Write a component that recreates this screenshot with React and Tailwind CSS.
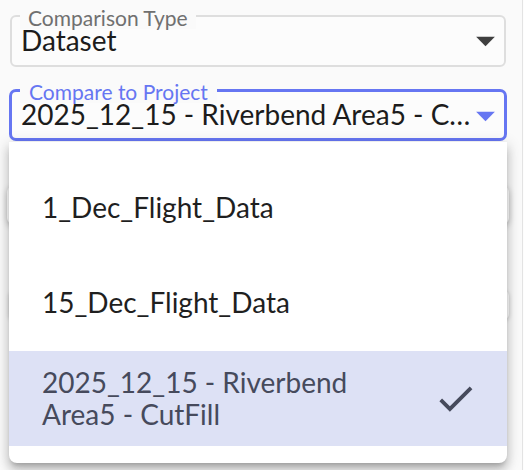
import React from "react";

const ArrowDown = ({ color }) => (
  <svg width="45" height="45" viewBox="0 0 24 24" className="shrink-0">
    <path d="M7 10l5 5 5-5z" fill={color} />
  </svg>
);

export default function App() {
  return (
    <div
      className="w-[524px] h-[470px] flex overflow-hidden bg-[#fafafa]"
      style={{ fontFamily: "Lato, 'Open Sans', sans-serif" }}
    >
      <div className="relative w-[522px] h-full">
        <div className="pl-[9px] w-[507px] flex flex-col">
          {/* Field 1 */}
          <div className="relative ml-px mt-[15px] w-[496px] h-[52px] rounded-[6px] border-2 border-[#dedede] bg-[#fcfcfc] flex items-start pl-[9px] pt-[6px] pr-[8px]">
            <span className="absolute left-[8px] top-[-10px] px-[8px] text-[21px] leading-[22px] text-[#707070] bg-[#fafafa]">
              Comparison Type
            </span>
            <span className="flex-1 text-[28px] leading-[34px] text-[#1c1c1c]">Dataset</span>
            <div className="mt-[-5px] mr-[-12px]">
              <ArrowDown color="#3f3f3f" />
            </div>
          </div>

          {/* Field 2 */}
          <div className="relative mt-[22px] w-[498px] h-[52px] rounded-[7px] border-[3px] border-[#6676f2] bg-[#fcfcfc] flex items-start pl-[9px] pt-[5px] pr-0">
            <span className="absolute left-[8px] top-[-11px] px-[9px] text-[21px] leading-[22px] text-[#6676f2] bg-[#fafafa]">
              Compare to Project
            </span>
            <span className="flex-none w-[450px] truncate text-[28px] leading-[34px] text-[#1c1c1c]">
              2025_12_15 - Riverbend Area5 - CutFill
            </span>
            <div className="mt-[-4px] ml-[-8px]">
              <ArrowDown color="#6676f2" />
            </div>
          </div>

          {/* Content behind the menu */}
          <div className="mt-[45px] w-[502px] ml-[-2px] h-[38px] rounded-[6px] bg-white shadow-[0_2px_6px_rgba(0,0,0,0.25)]" />
          <div className="mt-[66px] w-[500px] h-[30px] rounded-[6px] bg-white shadow-[0_1px_4px_rgba(0,0,0,0.2)]" />
        </div>

        {/* Dropdown menu */}
        <div className="absolute left-[9px] top-[142px] w-[498px] h-[321px] bg-white rounded-b-[8px] pt-[19px] shadow-[0px_5px_5px_-3px_rgba(0,0,0,0.2),0px_8px_10px_1px_rgba(0,0,0,0.14),0px_3px_14px_2px_rgba(0,0,0,0.12)]">
          <div className="h-[95px] flex items-center pl-[33px] pb-[4px] text-[28px] leading-[32px] text-[#1f1f1f]">
            1_Dec_Flight_Data
          </div>
          <div className="h-[95px] flex items-center pl-[33px] pb-[4px] text-[28px] leading-[32px] text-[#1f1f1f]">
            15_Dec_Flight_Data
          </div>
          <div className="h-[95px] flex items-center pl-[33px] pr-[29px] bg-[#dde1f5]">
            <span className="flex-1 text-[28px] leading-[32px] text-[#464a5c] pb-[2px]">
              2025_12_15 - Riverbend
              <br />
              Area5 - CutFill
            </span>
            <svg width="45" height="45" viewBox="0 0 24 24" className="shrink-0">
              <path d="M9 16.17 4.83 12l-1.42 1.41L9 19 21 7l-1.41-1.41z" fill="#464a5c" />
            </svg>
          </div>
        </div>
      </div>
      <div className="w-px h-full bg-[#e3e3e3]" />
      <div className="w-px h-full bg-[#fdfdfd]" />
    </div>
  );
}
